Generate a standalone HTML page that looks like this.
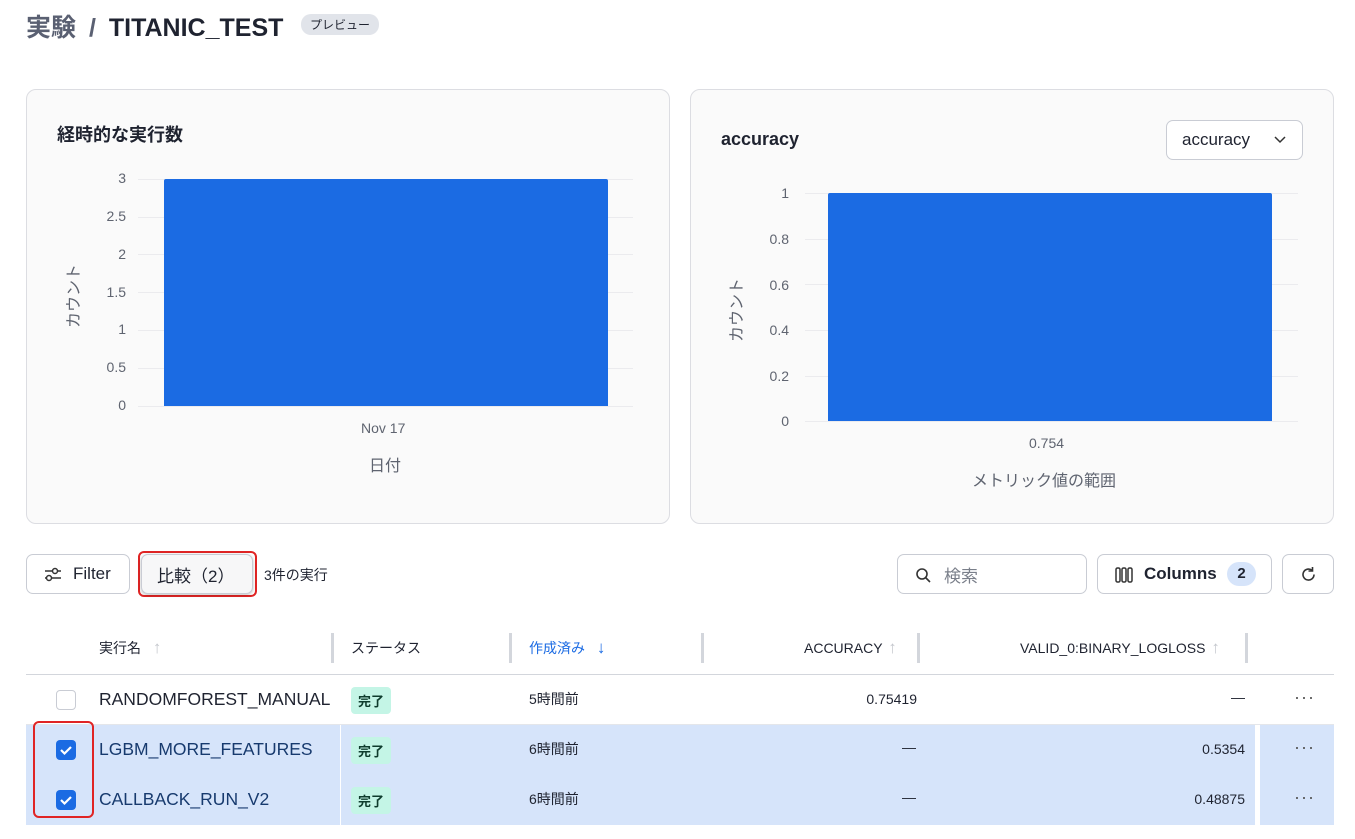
<!DOCTYPE html><html><head><meta charset="utf-8"><style>
*{box-sizing:border-box;margin:0;padding:0}
body{width:1355px;height:839px;background:#fff;font-family:"Liberation Sans","Noto Sans CJK JP",sans-serif;color:#1f2330;position:relative;overflow:hidden}
.a{position:absolute;white-space:nowrap}
.card{position:absolute;background:#fafafa;border:1px solid #dcdde2;border-radius:10px}
.yl{position:absolute;font-size:14px;color:#5f6470;text-align:right;width:40px}
.gl{position:absolute;height:1px;background:#ebebee}
.btn{position:absolute;border:1px solid #c9ccd4;border-radius:7px;background:#fff;height:40px;top:554px}
.cb{position:absolute;width:20px;height:20px;border-radius:4px;left:56px}
.tag{position:absolute;left:351px;background:#c4f5e6;color:#0f3d2e;font-size:13px;font-weight:bold;padding:4px 7px;border-radius:4px}
.td{font-size:14px}
.r{text-align:right}
.sep{position:absolute;width:3px;height:30px;top:633px;background:#d3d6dc}
.ar{color:#c4c7cd;font-size:17px;margin-left:6px}
.dots{position:absolute;left:1294px;font-size:18px;color:#555;letter-spacing:1px}
</style></head><body>
<div class="a" style="left:26px;top:8px;font-size:25px;font-weight:bold;color:#5a6072">実験 <span style="margin:0 6px">/</span> <span style="color:#1f2330">TITANIC_TEST</span></div>
<div class="a" style="left:301px;top:14px;background:#e1e4ea;border-radius:10px;font-size:12px;padding:2px 9px;color:#1f2330">プレビュー</div>

<div class="card" style="left:26px;top:89px;width:644px;height:435px"></div>
<div class="a" style="left:57px;top:121px;font-size:18px;font-weight:bold">経時的な実行数</div>
<div class="gl" style="left:138px;top:179px;width:495px"></div>
<div class="gl" style="left:138px;top:217px;width:495px"></div>
<div class="gl" style="left:138px;top:254px;width:495px"></div>
<div class="gl" style="left:138px;top:292px;width:495px"></div>
<div class="gl" style="left:138px;top:330px;width:495px"></div>
<div class="gl" style="left:138px;top:368px;width:495px"></div>
<div class="gl" style="left:138px;top:406px;width:495px"></div>
<div class="yl" style="left:86px;top:170px">3</div>
<div class="yl" style="left:86px;top:208px">2.5</div>
<div class="yl" style="left:86px;top:246px">2</div>
<div class="yl" style="left:86px;top:284px">1.5</div>
<div class="yl" style="left:86px;top:321px">1</div>
<div class="yl" style="left:86px;top:359px">0.5</div>
<div class="yl" style="left:86px;top:397px">0</div>
<div class="a" style="left:164px;top:179px;width:444px;height:227px;background:#1b6be3;border-radius:2px 2px 0 0"></div>
<div class="a" style="left:361px;top:420px;font-size:14px;color:#5f6470">Nov 17</div>
<div class="a" style="left:369px;top:452px;font-size:16px;color:#5f6470">日付</div>
<div class="a" style="left:40px;top:284px;font-size:16px;color:#5f6470;transform:rotate(-90deg)">カウント</div>

<div class="card" style="left:690px;top:89px;width:644px;height:435px"></div>
<div class="a" style="left:721px;top:129px;font-size:18px;font-weight:bold">accuracy</div>
<div class="a" style="left:1166px;top:120px;width:137px;height:40px;border:1px solid #c9ccd4;border-radius:7px;background:#fff;font-size:17px;padding:9px 15px">accuracy <svg style="position:absolute;right:16px;top:15px" width="12" height="8"><path d="M1 1l5 5 5-5" stroke="#333" fill="none" stroke-width="1.5"/></svg></div>
<div class="gl" style="left:805px;top:193px;width:493px"></div>
<div class="gl" style="left:805px;top:239px;width:493px"></div>
<div class="gl" style="left:805px;top:284px;width:493px"></div>
<div class="gl" style="left:805px;top:330px;width:493px"></div>
<div class="gl" style="left:805px;top:376px;width:493px"></div>
<div class="gl" style="left:805px;top:421px;width:493px"></div>
<div class="yl" style="left:749px;top:185px">1</div>
<div class="yl" style="left:749px;top:231px">0.8</div>
<div class="yl" style="left:749px;top:277px">0.6</div>
<div class="yl" style="left:749px;top:322px">0.4</div>
<div class="yl" style="left:749px;top:368px">0.2</div>
<div class="yl" style="left:749px;top:413px">0</div>
<div class="a" style="left:828px;top:193px;width:444px;height:228px;background:#1b6be3;border-radius:2px 2px 0 0"></div>
<div class="a" style="left:1029px;top:435px;font-size:14px;color:#5f6470">0.754</div>
<div class="a" style="left:972px;top:467px;font-size:16px;color:#5f6470">メトリック値の範囲</div>
<div class="a" style="left:703px;top:298px;font-size:16px;color:#5f6470;transform:rotate(-90deg)">カウント</div>

<div class="btn" style="left:26px;width:104px;font-size:17px;padding:9px 0 0 46px">Filter
<svg style="position:absolute;left:17px;top:12px" width="18" height="16" fill="none" stroke="#333" stroke-width="1.5"><circle cx="11" cy="4" r="2.5"/><path d="M1 4h7M14 4h3"/><circle cx="5" cy="11" r="2.5"/><path d="M1 11h1M8 11h9"/></svg></div>
<div class="a" style="left:138px;top:551px;width:119px;height:46px;border:2px solid #e02424;border-radius:6px"></div>
<div class="btn" style="left:141px;width:112px;font-size:17px;padding:7px 0 0 15px;background:#f7f7f8;box-shadow:0 1px 3px rgba(0,0,0,.25)">比較（2）</div>
<div class="a" style="left:264px;top:565px;font-size:14px">3件の実行</div>
<div class="btn" style="left:897px;width:190px;font-size:17px;padding:7px 0 0 46px;color:#7a7f8a">検索
<svg style="position:absolute;left:17px;top:12px" width="16" height="16" fill="none" stroke="#333" stroke-width="1.6"><circle cx="7" cy="7" r="5"/><path d="M11 11l4 4"/></svg></div>
<div class="btn" style="left:1097px;width:175px;font-size:17px;padding:9px 0 0 46px;color:#1f2330"><span style="font-weight:bold">Columns</span>
<svg style="position:absolute;left:17px;top:12px" width="18" height="16" fill="none" stroke="#333" stroke-width="1.5"><rect x="1" y="1" width="4" height="14" rx="1.5"/><rect x="7" y="1" width="4" height="14" rx="1.5"/><rect x="13" y="1" width="4" height="14" rx="1.5"/></svg>
<span style="position:absolute;left:129px;top:7px;width:29px;height:24px;border-radius:12px;background:#d6e4fa;font-size:15px;font-weight:bold;text-align:center;line-height:24px">2</span></div>
<div class="btn" style="left:1282px;width:52px">
<svg style="position:absolute;left:17px;top:11px" width="17" height="17" fill="none" stroke="#333" stroke-width="1.6"><path d="M14 8.5A5.5 5.5 0 1 1 12 4.3"/><path d="M12.5 1v4h-4"/></svg></div>

<div class="a" style="left:99px;top:638px;font-size:14px">実行名 <span class="ar" style="margin-left:8px">↑</span></div>
<div class="sep" style="left:331px"></div>
<div class="a" style="left:351px;top:638px;font-size:14px">ステータス</div>
<div class="sep" style="left:509px"></div>
<div class="a" style="left:529px;top:638px;font-size:14px;color:#1b6be3">作成済み <span style="margin-left:8px;font-size:17px">↓</span></div>
<div class="sep" style="left:701px"></div>
<div class="a" style="left:804px;top:638px;font-size:14px">ACCURACY <span class="ar" style="margin-left:2px">↑</span></div>
<div class="sep" style="left:917px"></div>
<div class="a" style="left:1020px;top:638px;font-size:14px">VALID_0:BINARY_LOGLOSS <span class="ar" style="margin-left:2px">↑</span></div>
<div class="sep" style="left:1245px"></div>
<div class="a" style="left:26px;top:674px;width:1308px;height:1px;background:#d3d6dc"></div>

<div class="a" style="left:26px;top:725px;width:1308px;height:100px;background:#d6e4fa"></div>
<div class="a" style="left:340px;top:725px;width:1px;height:100px;background:#fff"></div>
<div class="a" style="left:1255px;top:725px;width:5px;height:100px;background:#fff"></div>
<div class="a" style="left:26px;top:724px;width:1308px;height:1px;background:#e4e6ea"></div>

<div class="cb" style="top:690px;border:1px solid #c9ccd4;background:#fff"></div>
<div class="a td" style="left:99px;top:689px;font-size:17.5px">RANDOMFOREST_MANUAL</div>
<div class="tag" style="top:687px">完了</div>
<div class="a td" style="left:529px;top:689px">5時間前</div>
<div class="a td r" style="left:817px;width:100px;top:691px">0.75419</div>
<div class="a td r" style="left:1145px;width:100px;top:689px">—</div>
<div class="dots" style="top:687px">···</div>

<div class="cb" style="top:740px;background:#1b6be3"><svg width="20" height="20"><path d="M5 10l3.5 3.5L15 7" stroke="#fff" stroke-width="2.2" fill="none"/></svg></div>
<div class="a td" style="left:99px;top:739px;font-size:17.5px;color:#173a6e">LGBM_MORE_FEATURES</div>
<div class="tag" style="top:737px">完了</div>
<div class="a td" style="left:529px;top:739px">6時間前</div>
<div class="a td" style="left:902px;top:739px">—</div>
<div class="a td r" style="left:1145px;width:100px;top:741px">0.5354</div>
<div class="dots" style="top:737px">···</div>

<div class="cb" style="top:790px;background:#1b6be3"><svg width="20" height="20"><path d="M5 10l3.5 3.5L15 7" stroke="#fff" stroke-width="2.2" fill="none"/></svg></div>
<div class="a td" style="left:99px;top:789px;font-size:17.5px;color:#173a6e">CALLBACK_RUN_V2</div>
<div class="tag" style="top:787px">完了</div>
<div class="a td" style="left:529px;top:789px">6時間前</div>
<div class="a td" style="left:902px;top:789px">—</div>
<div class="a td r" style="left:1145px;width:100px;top:791px">0.48875</div>
<div class="dots" style="top:787px">···</div>

<div class="a" style="left:33px;top:721px;width:61px;height:97px;border:2px solid #e02424;border-radius:6px"></div>
</body></html>
